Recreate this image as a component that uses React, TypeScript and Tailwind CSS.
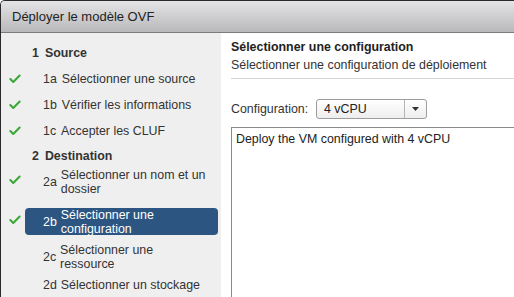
import { Check } from 'lucide-react';

type Step = {
  num: string;
  lines: string[];
  done?: boolean;
  active?: boolean;
  cls: string;
};

const steps: Step[] = [
  { num: '2a', lines: ['Sélectionner un nom et un', 'dossier'], done: true, cls: 'h-[27px]' },
  { num: '2b', lines: ['Sélectionner une', 'configuration'], done: true, active: true, cls: 'h-[27px] mt-[13px]' },
  { num: '2c', lines: ['Sélectionner une', 'ressource'], cls: 'h-[28px] mt-[8px]' },
  { num: '2d', lines: ['Sélectionner un stockage'], cls: 'h-[28px]' },
];

function Tick({ show }: { show?: boolean }) {
  return (
    <div className="w-[24px] flex justify-center pl-[3px]">
      {show && <Check className="w-[14px] h-[14px] text-[#3ca83a]" strokeWidth={3.6} />}
    </div>
  );
}

export default function App() {
  return (
    <div
      className="w-[514px] h-[297px] overflow-hidden flex flex-col border-l border-t border-[#2a2a2a] rounded-tl-[5px] bg-white text-[12.4px] text-[#333]"
      style={{ fontFamily: '"Liberation Sans", Arial, sans-serif' }}
    >
      {/* Title bar */}
      <div className="h-[32px] shrink-0 flex items-center pl-[11px] border-b border-[#7c7c7c] bg-gradient-to-b from-[#e4e4e6] to-[#b9b9bc] text-[13px] text-[#222]">
        Déployer le modèle OVF
      </div>

      <div className="flex flex-1 min-h-0">
        {/* Steps */}
        <div className="w-[220px] shrink-0 bg-[#efefef] pt-[7px]">
          <div className="h-[26px] flex items-center pl-[31px] font-bold gap-[6px]">
            <span>1</span>
            <span>Source</span>
          </div>
          {[
            ['1a', 'Sélectionner une source'],
            ['1b', 'Vérifier les informations'],
            ['1c', 'Accepter les CLUF'],
          ].map(([n, t]) => (
            <div key={n} className="h-[26px] flex items-center">
              <Tick show />
              <div className="flex items-center gap-[5px] pl-[18px]">
                <span>{n}</span>
                <span>{t}</span>
              </div>
            </div>
          ))}
          <div className="h-[24px] flex items-center pl-[31px] font-bold gap-[6px]">
            <span>2</span>
            <span>Destination</span>
          </div>
          {steps.map((s) => (
            <div key={s.num} className={`flex items-center ${s.cls}`}>
              <div className="self-start h-[24px] flex items-center">
                <Tick show={s.done} />
              </div>
              <div
                className={`flex-1 h-full mr-[3px] flex items-center gap-[4px] pl-[18px] rounded-[4px] leading-[14px] ${
                  s.active ? 'bg-[#2c5581] text-white' : ''
                }`}
              >
                <span>{s.num}</span>
                <div className="flex flex-col">
                  {s.lines.map((l) => (
                    <span key={l}>{l}</span>
                  ))}
                </div>
              </div>
            </div>
          ))}
        </div>

        {/* Content */}
        <div className="flex-1 min-w-0 pl-[10px] pt-[5px] flex flex-col">
          <div className="leading-[18px] font-bold text-[#222]">Sélectionner une configuration</div>
          <div className="leading-[18px]">Sélectionner une configuration de déploiement</div>
          <div className="mt-[4px] border-t border-[#d6d6d6]" />

          <div className="mt-[20px] flex items-center h-[20px]">
            <span className="w-[85px]">Configuration:</span>
            <div className="w-[111px] h-[20px] flex rounded-[3px] border border-[#9d9d9d] bg-gradient-to-b from-white to-[#eeeeee]">
              <div className="flex-1 flex items-center pl-[7px] text-[#222]">4 vCPU</div>
              <div className="w-[22px] border-l border-[#b5b5b5] flex items-center justify-center">
                <svg width="7" height="4" viewBox="0 0 7 4">
                  <path d="M0 0h7L3.5 4z" fill="#333" />
                </svg>
              </div>
            </div>
          </div>

          <div className="mt-[8px] flex-1 -mr-[4px] -mb-[4px] border border-[#8a8a8a] px-[4px] pt-[4px] leading-[14px] text-[#222]">
            Deploy the VM configured with 4 vCPU
          </div>
        </div>
      </div>
    </div>
  );
}
